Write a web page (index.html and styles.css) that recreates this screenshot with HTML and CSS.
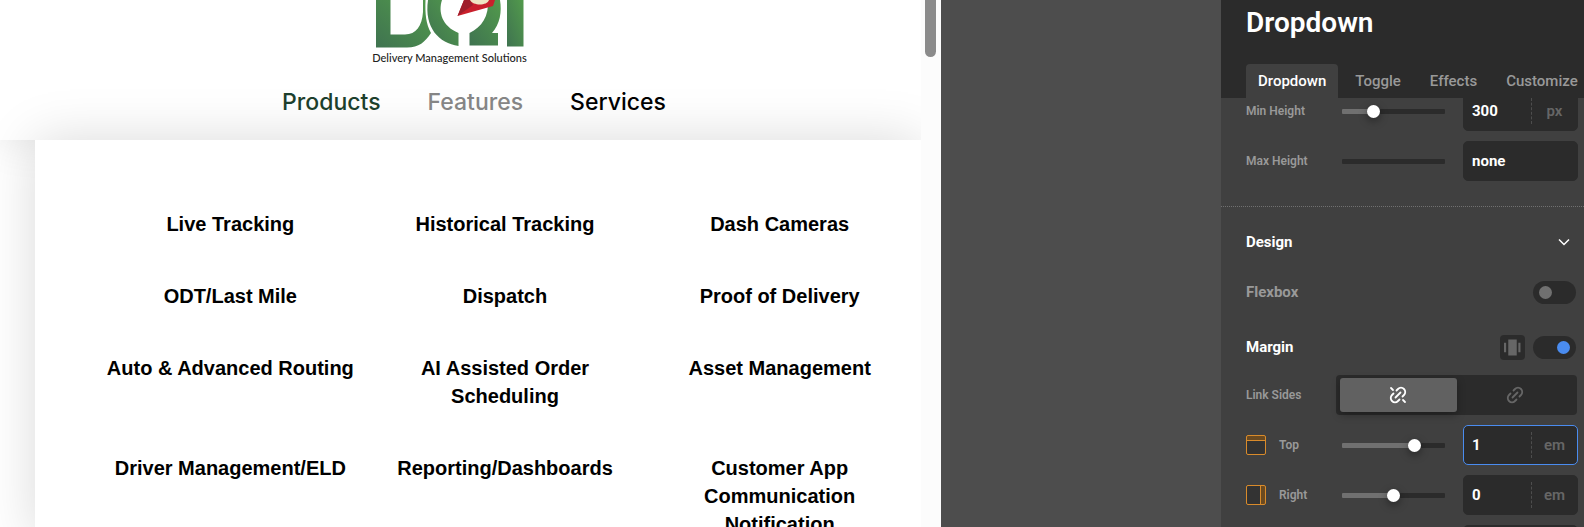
FILE: index.html
```html
<!DOCTYPE html>
<html lang="en">
<head>
  <meta charset="UTF-8">
  <meta name="viewport" content="width=device-width, initial-scale=1.0">
  <title>Dropdown</title>
  <link rel="stylesheet" href="styles.css">
</head>
<body>
  <div class="builder">
    <main class="preview">
      <div class="page">
        <header class="site-header">
          <a class="logo" href="#" aria-label="Delivery Management Solutions">
            <svg class="logo-mark" viewBox="0 0 148 48" aria-hidden="true">
              <defs>
                <linearGradient id="green" x1="0" y1="1" x2="1" y2="0">
                  <stop offset="0" stop-color="#3f7350"/>
                  <stop offset="1" stop-color="#529a4c"/>
                </linearGradient>
              </defs>
              <path fill="url(#green)" d="M0 0H14.500V34.500H29C40 34.500 46 26 47 12V0H49.500C49 14 50 24 55 33C49 42 43 47.500 31 47.500H0Z"/>
              <path fill="url(#green)" d="M52 0H66C62 12 66 26 82.500 33V46C63 43 48 28 52 0Z"/>
              <path fill="url(#green)" d="M112 0H124C126 12 124 24 116 33H122V45.500H93.500V33C106 27 113 16 112 0Z"/>
              <path fill="url(#green)" d="M131 0H147.500V46.500H131Z"/>
              <path fill="#c9202c" d="M88 0H119L117 6L81.500 16Z"/>
              <path fill="#9f1d2b" d="M88 0H94L97 5L81.500 16Z"/>
              <path fill="#eee6c3" d="M94 0C97 6 111 6 113 0Z"/>
            </svg>
            <span class="logo-text">Delivery Management Solutions</span>
          </a>
          <nav class="main-nav">
            <a class="nav-products" href="#">Products</a>
            <a class="nav-features" href="#">Features</a>
            <a href="#">Services</a>
          </nav>
        </header>
        <div class="mega-menu">
          <a href="#">Live Tracking</a>
          <a href="#">Historical Tracking</a>
          <a href="#">Dash Cameras</a>
          <a href="#">ODT/Last Mile</a>
          <a href="#">Dispatch</a>
          <a href="#">Proof of Delivery</a>
          <a href="#">Auto &amp; Advanced Routing</a>
          <a href="#">AI Assisted Order Scheduling</a>
          <a href="#">Asset Management</a>
          <a href="#">Driver Management/ELD</a>
          <a href="#">Reporting/Dashboards</a>
          <a href="#">Customer App Communication Notification</a>
        </div>
      </div>
      <div class="scrollbar"><div class="thumb"></div></div>
    </main>

    <aside class="panel">
      <div class="panel-head">
        <h1>Dropdown</h1>
        <div class="tabs">
          <button class="tab active" type="button">Dropdown</button>
          <button class="tab" type="button">Toggle</button>
          <button class="tab" type="button">Effects</button>
          <button class="tab" type="button">Customize</button>
        </div>
      </div>
      <div class="panel-body">
        <div class="group sizes">
          <div class="row">
            <label for="min-height">Min Height</label>
            <input class="slider at-30" type="range" value="28" aria-label="Min Height slider">
            <div class="field"><input id="min-height" type="text" value="300"><button class="unit" type="button">px</button></div>
          </div>
          <div class="row">
            <label for="max-height">Max Height</label>
            <input class="slider empty" type="range" value="0" aria-label="Max Height slider">
            <div class="field"><input id="max-height" type="text" value="none"></div>
          </div>
        </div>

        <div class="group">
          <div class="heading">
            <h2>Design</h2>
            <button class="collapse" type="button" aria-label="Collapse">
              <svg viewBox="0 0 12 12"><path d="M1 3.500L6 8.500L11 3.500"/></svg>
            </button>
          </div>
          <div class="heading flexbox">
            <label for="flexbox">Flexbox</label>
            <input class="switch" id="flexbox" type="checkbox">
          </div>
          <div class="heading margin">
            <label for="margin">Margin</label>
            <button class="center-btn" type="button" aria-label="Center">
              <svg viewBox="0 0 16 16"><path d="M4 0.500H12V15.500H4ZM0 3.500H2V12.500H0ZM13.500 3.500H15.500V12.500H13.500Z"/></svg>
            </button>
            <input class="switch" id="margin" type="checkbox" checked>
          </div>
          <div class="row link-row">
            <span class="name">Link Sides</span>
            <div class="segmented">
              <button class="on" type="button" aria-label="Unlink sides">
                <svg viewBox="0 0 16 16"><path d="M6.500 3.500L8 2A3.900 3.900 0 0 1 14 8L12.500 9.500M9.500 12.500L8 14A3.900 3.900 0 0 1 2 8L3.500 6.500M5.500 10.500L10.500 5.500M1 1L3 3M13 13L15 15"/></svg>
              </button>
              <button type="button" aria-label="Link sides">
                <svg viewBox="0 0 16 16"><path d="M6.500 3.500L8 2A3.900 3.900 0 0 1 14 8L12.500 9.500M9.500 12.500L8 14A3.900 3.900 0 0 1 2 8L3.500 6.500M5.500 10.500L10.500 5.500"/></svg>
              </button>
            </div>
          </div>
          <div class="row">
            <label class="side top" for="top">Top</label>
            <input class="slider at-70" type="range" value="73" aria-label="Top slider">
            <div class="field focus"><input id="top" type="text" value="1"><button class="unit" type="button">em</button></div>
          </div>
          <div class="row">
            <label class="side right" for="right">Right</label>
            <input class="slider at-50" type="range" value="50" aria-label="Right slider">
            <div class="field"><input id="right" type="text" value="0"><button class="unit" type="button">em</button></div>
          </div>
          <div class="row">
            <span class="name"></span>
            <div class="field"></div>
          </div>
        </div>
      </div>
    </aside>
  </div>
</body>
</html>
```
FILE: styles.css
```css
*, *::before{ padding: 0; margin: 0; box-sizing: border-box;}
a{ text-decoration: none;}
button{ border: 0; background: none; font: inherit; color: inherit;}
body{ height: 100vh; overflow: hidden; background-color: #4d4d4d;}
.builder{ display: flex; justify-content: space-between; height: 100vh; overflow: hidden;}

/* site preview */
.preview{ display: flex; flex: 0 1 941px; background-color: #fff; overflow: hidden;}
.page{ flex: 1; overflow: hidden;}
.scrollbar{ width: 20px; padding: 0 5px 0 4px; background-color: #fcfcfc;}
.thumb{ height: 57px; border-radius: 0 0 6px 6px; background-color: #8b8b8b;}
.site-header{ display: flex; flex-direction: column; align-items: center; height: 140px;
      box-shadow: 0 0 40px rgba(0,0,0,.12);
}
.logo{ display: flex; flex-direction: column; align-items: center; margin-right: 22px; color: #222;}
.logo-mark{ display: block; width: 148px; height: 48px;}
.logo-text{ font: 500 11px/20px Lato, sans-serif; white-space: nowrap;}
.main-nav{ display: flex; gap: 47px; margin-top: 18px; padding-left: 27px; font: 500 23px/32px Inter, sans-serif;}
.main-nav a{ color: #000;}
.main-nav .nav-products{ color: #1d3f2c;}
.main-nav .nav-features{ color: #858585;}
.mega-menu{ display: grid; grid-template-columns: repeat(3, 1fr); align-content: start; row-gap: 44px;
      min-height: 400px; margin-left: 35px; padding: 70px 4px 0 58px;
      background-color: #fff; box-shadow: 0 0 50px rgba(0,0,0,.15);
}
.mega-menu a{ padding: 0 10px; color: #000; text-align: center;
      font: bold 20px/28px "Liberation Sans", Arial, sans-serif;
}

/* settings panel */
.panel{ flex: 0 0 363px; background-color: #404040; overflow: hidden;
      color: #999; font: 600 12px/20px Roboto, sans-serif;
}
.panel-head{ height: 98px; padding: 6px 0 0 25px; background-color: #2b2b2b;}
.panel h1{ color: #fff; font-size: 28px; line-height: 34px; font-weight: 600;}
.tabs{ display: flex; gap: 5px; margin-top: 24px; white-space: nowrap;}
.tab{ height: 34px; padding: 0 12px; border-radius: 4px 4px 0 0; font-size: 15px; font-weight: 500;}
.tab.active{ background-color: #404040; color: #fff;}
.group{ padding: 12px 6px 0 25px;}
.sizes{ padding-top: 1px; padding-bottom: 25px; border-bottom: 1px dotted #707070; overflow: hidden;}
.sizes .row:first-child{ margin-top: -8px;}
.row{ display: flex; align-items: center; height: 40px; margin-bottom: 10px;}
.sizes .row:last-child{ margin-bottom: 0;}
.row label, .name{ flex: 1; }
.slider{ appearance: none; width: 103px; height: 20px; margin-right: 18px; background: none;}
.slider::-webkit-slider-runnable-track{ height: 5px; border-radius: 1px; background-color: #2b2b2b;}
.slider::-webkit-slider-thumb{ appearance: none; width: 13px; height: 13px; margin-top: -4px; border-radius: 50%;
      background-color: #fff; box-shadow: 0 3px 8px rgba(0,0,0,.4);
}
.at-30::-webkit-slider-runnable-track{ background: linear-gradient(90deg, #707070 30%, #2b2b2b 30%);}
.at-50::-webkit-slider-runnable-track{ background: linear-gradient(90deg, #707070 50%, #2b2b2b 50%);}
.at-70::-webkit-slider-runnable-track{ background: linear-gradient(90deg, #707070 70%, #2b2b2b 70%);}
.empty::-webkit-slider-thumb{ visibility: hidden;}
.field{ display: flex; align-items: center; width: 115px; height: 40px; border: 1px solid #2b2b2b; border-radius: 5px;
      background-color: #2b2b2b; overflow: hidden;
}
.field.focus{ border-color: #4a8cf0;}
.field input{ flex: 1; min-width: 0; padding-left: 8px; border: 0; outline: 0; background: none; color: #fff;
      font: bold 15px/20px Roboto, sans-serif;
}
.unit{ width: 46px; height: 26px; border-left: 1px dashed #4d4d4d; color: #666; font-size: 15px;}
.heading{ display: flex; align-items: center; justify-content: space-between; height: 46px; padding-right: 2px;
      color: #fff; font-size: 15px; font-weight: bold;
}
.heading h2{ font-size: 15px;}
.collapse{ width: 24px; height: 24px; padding: 6px;}
.collapse svg{ display: block; fill: none; stroke: #fff; stroke-width: 1.500;}
.flexbox{ height: 54px; color: #999;}
.margin{ height: 56px; gap: 8px;}
.margin label{ flex: 1;}
.switch{ appearance: none; width: 43px; height: 23px; padding: 5px 6px; border-radius: 12px; background-color: #2b2b2b;}
.switch::before{ content: ""; display: block; width: 13px; height: 13px; border-radius: 50%; background-color: #707070;}
.switch:checked::before{ margin-left: auto; background-color: #4a8cf0;}
.center-btn{ width: 25px; height: 25px; padding: 4px; border-radius: 4px; background-color: #2b2b2b;}
.center-btn svg{ display: block; fill: #666;}
.segmented{ display: flex; width: 241px; height: 40px; margin-right: 1px; padding: 3px 4px; border-radius: 4px; background-color: #2b2b2b;}
.segmented button{ display: grid; flex: 1; place-items: center; border-radius: 3px;}
.segmented .on{ background-color: #616161; box-shadow: 0 3px 8px rgba(0,0,0,.3);}
.segmented svg{ width: 16px; height: 16px; overflow: visible; fill: none; stroke: #666; stroke-width: 1.800; stroke-linecap: round;}
.segmented .on svg{ stroke: #fff;}
.side{ display: flex; align-items: center; gap: 13px;}
.side::before{ content: ""; width: 20px; height: 20px; border: 1px solid #d98b2b; border-radius: 2px;}
.side.top::before{ background: linear-gradient(#6b4a20 4px, #d98b2b 4px, #d98b2b 5px, #333 5px);}
.side.right::before{ background: linear-gradient(270deg, #6b4a20 4px, #d98b2b 4px, #d98b2b 5px, #333 5px);}
```
